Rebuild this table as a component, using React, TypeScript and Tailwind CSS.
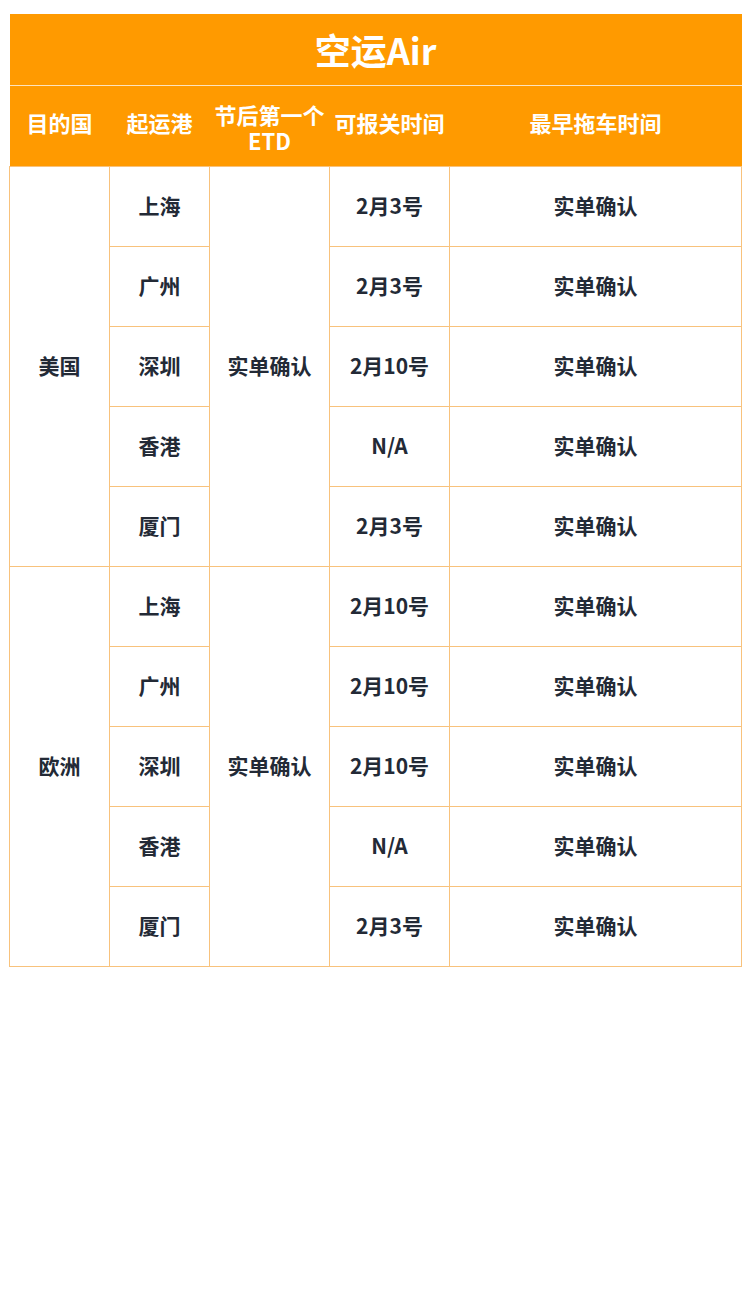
const groups = [
  {
    country: "美国",
    rows: [
      ["上海", "2月3号"],
      ["广州", "2月3号"],
      ["深圳", "2月10号"],
      ["香港", "N/A"],
      ["厦门", "2月3号"],
    ],
  },
  {
    country: "欧洲",
    rows: [
      ["上海", "2月10号"],
      ["广州", "2月10号"],
      ["深圳", "2月10号"],
      ["香港", "N/A"],
      ["厦门", "2月3号"],
    ],
  },
]

const cell = "border border-[#f8c27c] text-center align-middle"

export default function App() {
  return (
    <div
      className="min-h-[1299px] w-[751px] bg-white pt-[14px] pl-[9px]"
      style={{ fontFamily: '"Noto Sans CJK SC", "Noto Sans", sans-serif' }}
    >
      <table className="w-[732px] table-fixed border-collapse font-bold">
        <colgroup>
          <col className="w-[100px]" />
          <col className="w-[100px]" />
          <col className="w-[120px]" />
          <col className="w-[120px]" />
          <col className="w-[292px]" />
        </colgroup>
        <thead>
          <tr className="h-[71px] bg-[#ff9a00]">
            <th colSpan={5} className="border-b border-[#fde3bd] text-[36px] leading-none text-white">
              空运Air
            </th>
          </tr>
          <tr className="h-[81px] bg-[#ff9a00] text-[22px] leading-[26px] text-white">
            <th className="pb-2">目的国</th>
            <th className="pb-2">起运港</th>
            <th className="px-0 pt-[2px]">
              节后第一个
              <br />
              ETD
            </th>
            <th className="pb-2">可报关时间</th>
            <th className="pb-2">最早拖车时间</th>
          </tr>
        </thead>
        <tbody className="text-[21px] text-[#232a36]">
          {groups.map((g) =>
            g.rows.map(([port, date], i) => (
              <tr key={g.country + port} className="h-[80px]">
                {i === 0 && (
                  <td rowSpan={5} className={cell}>
                    {g.country}
                  </td>
                )}
                <td className={cell}>{port}</td>
                {i === 0 && (
                  <td rowSpan={5} className={cell}>
                    实单确认
                  </td>
                )}
                <td className={cell}>{date}</td>
                <td className={cell}>实单确认</td>
              </tr>
            ))
          )}
        </tbody>
      </table>
    </div>
  )
}
